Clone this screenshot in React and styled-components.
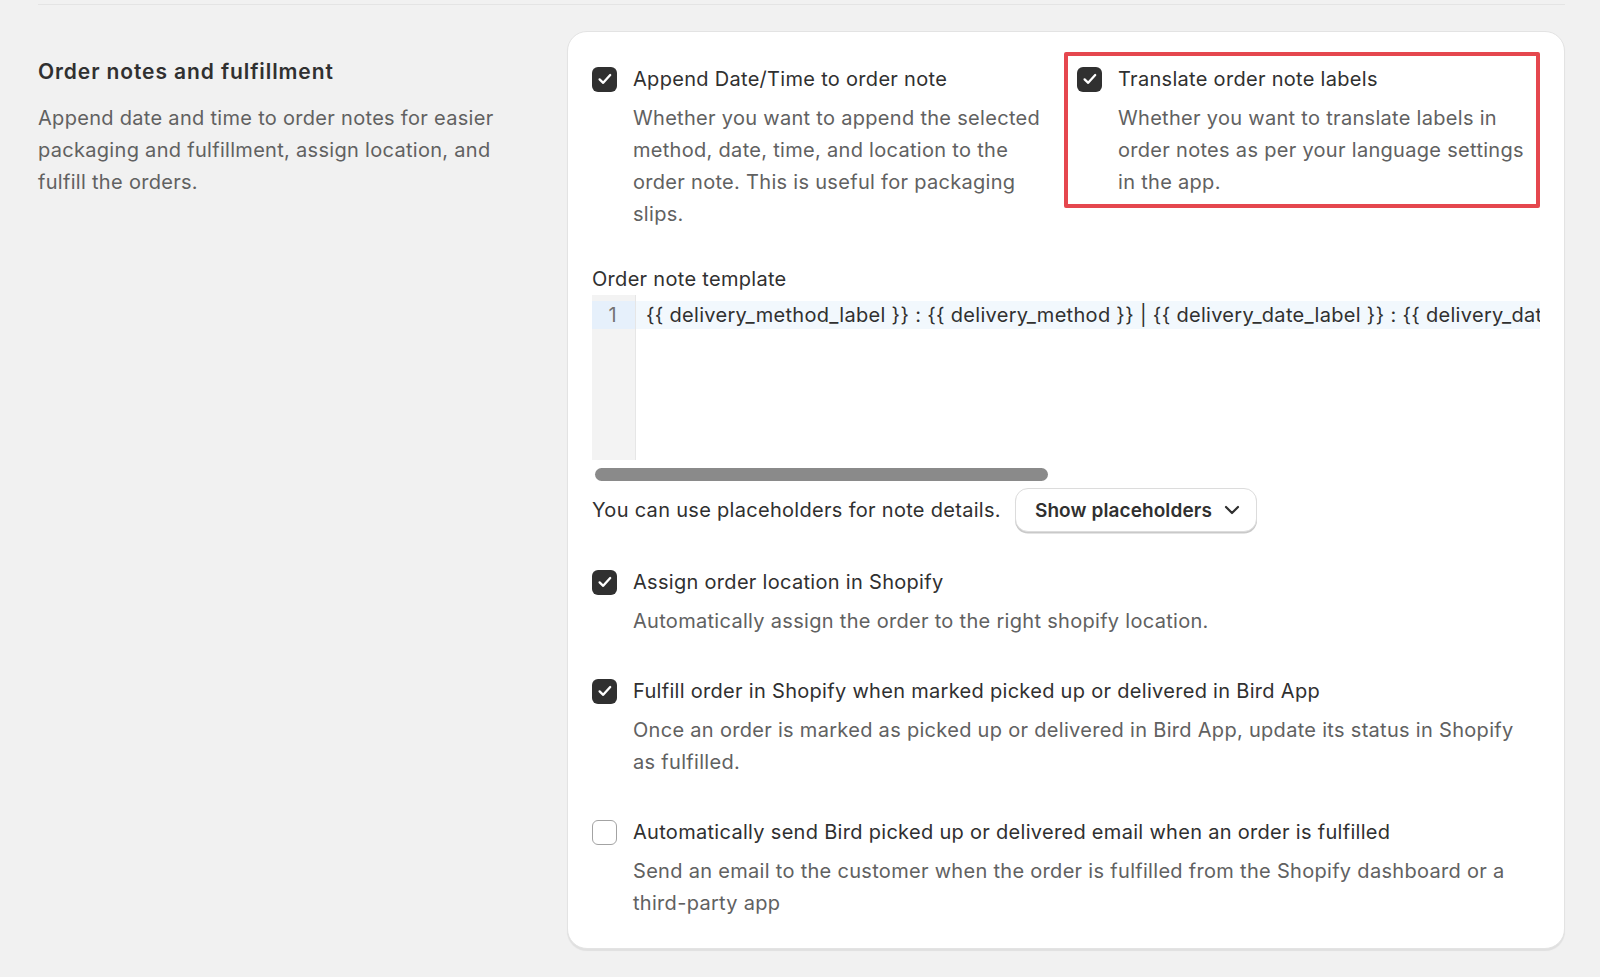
import React from 'react';
import styled, { createGlobalStyle } from 'styled-components';

const GlobalStyle = createGlobalStyle`
  html, body { margin: 0; padding: 0; background: #f1f1f1; }
  body {
    font-family: Inter, "Noto Sans", "Liberation Sans", sans-serif;
    color: #303030;
    letter-spacing: 0.3px;
    -webkit-font-smoothing: antialiased;
  }
  * { box-sizing: border-box; }
`;

const Page = styled.div`
  width: 1600px;
  height: 977px;
  overflow: hidden;
  padding: 4px 35px 0 38px;
`;

const Divider = styled.div`
  height: 1px;
  background: #e4e4e4;
`;

const Section = styled.section`
  display: grid;
  grid-template-columns: 500px minmax(0, 1fr);
  column-gap: 29px;
  padding-top: 26px;
`;

const Intro = styled.div`
  padding-top: 27px;
`;

const Heading = styled.h2`
  margin: 0 0 16px;
  font-size: 21px;
  line-height: 28px;
  font-weight: 600;
  letter-spacing: 0.9px;
  color: #303030;
`;

const IntroText = styled.p`
  margin: 0;
  font-size: 20px;
  line-height: 32px;
  color: #616161;
`;

const Card = styled.div`
  min-width: 0;
  background: #ffffff;
  border: 1px solid #e3e3e3;
  border-radius: 20px;
  box-shadow: 0 2px 1px rgba(0, 0, 0, 0.07);
  padding: 31px 24px 29px;
  display: flex;
  flex-direction: column;
`;

const TopRow = styled.div`
  display: grid;
  grid-template-columns: minmax(0, 1fr) minmax(0, 1fr);
  column-gap: 22px;
  align-items: start;
`;

const Highlighted = styled.div`
  position: relative;
  &::after {
    content: '';
    position: absolute;
    top: -11px;
    left: -13px;
    right: 0;
    bottom: -10px;
    border: 4px solid #e5474e;
    border-radius: 2px;
    pointer-events: none;
  }
`;

const Option = styled.div`
  display: grid;
  grid-template-columns: 25px minmax(0, 1fr);
  column-gap: 16px;
  row-gap: 7px;
`;

const Box = styled.span`
  grid-row: 1;
  grid-column: 1;
  align-self: center;
  width: 25px;
  height: 25px;
  border-radius: 6px;
  display: flex;
  align-items: center;
  justify-content: center;
  background: ${p => (p.$checked ? '#303030' : '#ffffff')};
  border: ${p => (p.$checked ? 'none' : '1.5px solid #a3a3a3')};
`;

const Label = styled.span`
  grid-row: 1;
  grid-column: 2;
  font-size: 20px;
  line-height: 32px;
  color: #303030;
`;

const Help = styled.span`
  grid-row: 2;
  grid-column: 2;
  font-size: 20px;
  line-height: 32px;
  color: #616161;
`;

const FieldLabel = styled.div`
  margin-top: 33px;
  font-size: 20px;
  line-height: 32px;
  color: #303030;
`;

const Editor = styled.div`
  display: flex;
  height: 165px;
  overflow: hidden;
  background: #ffffff;
`;

const Gutter = styled.div`
  width: 44px;
  flex: none;
  background: #f3f3f3;
  border-right: 1px solid #e6e6e6;
  padding-top: 6px;
`;

const GutterLine = styled.div`
  height: 28px;
  line-height: 28px;
  font-size: 20px;
  text-align: right;
  padding-right: 18px;
  color: #737373;
  background: ${p => (p.$active ? '#e6f0fb' : 'transparent')};
`;

const Code = styled.div`
  flex: 1;
  min-width: 0;
  padding-top: 6px;
`;

const CodeLine = styled.div`
  height: 28px;
  line-height: 28px;
  font-size: 20px;
  white-space: nowrap;
  overflow: hidden;
  padding-left: 10px;
  color: #303030;
  background: ${p => (p.$active ? '#f2f8fd' : 'transparent')};
`;

const ScrollTrack = styled.div`
  margin-top: 8px;
  padding-left: 3px;
  height: 13px;
`;

const ScrollThumb = styled.div`
  width: 453px;
  height: 13px;
  border-radius: 7px;
  background: #8a8a8a;
`;

const PlaceholderRow = styled.div`
  margin-top: 7px;
  display: flex;
  align-items: center;
  gap: 14px;
`;

const RowText = styled.span`
  font-size: 20px;
  line-height: 32px;
  color: #303030;
`;

const Button = styled.button`
  height: 44px;
  padding: 0 16px 0 19px;
  display: inline-flex;
  align-items: center;
  gap: 12px;
  background: #ffffff;
  border: 1px solid #dcdcdc;
  border-radius: 13px;
  box-shadow: 0 1.5px 0 #c9c9c9;
  font-family: inherit;
  font-size: 19px;
  letter-spacing: 0.1px;
  font-weight: 600;
  color: #303030;
  cursor: pointer;
`;

const OptionList = styled.div`
  margin-top: 34px;
  display: flex;
  flex-direction: column;
  gap: 38px;
`;

const Check = () => (
  <svg width="18" height="18" viewBox="0 0 18 18" fill="none">
    <path d="M3.6 9.4 L7.2 12.8 L14.2 5" stroke="#fff" strokeWidth="2.3" strokeLinecap="round" strokeLinejoin="round" />
  </svg>
);

const Chevron = () => (
  <svg width="16" height="10" viewBox="0 0 16 10" fill="none">
    <path d="M2 2 L8 8 L14 2" stroke="#303030" strokeWidth="2.2" strokeLinecap="round" strokeLinejoin="round" />
  </svg>
);

const Checkbox = ({ checked }) => (
  <Box $checked={checked}>{checked && <Check />}</Box>
);

const OptionItem = ({ checked, label, help }) => (
  <Option>
    <Checkbox checked={checked} />
    <Label>{label}</Label>
    <Help>{help}</Help>
  </Option>
);

const template =
  '{{ delivery_method_label }} : {{ delivery_method }} | {{ delivery_date_label }} : {{ delivery_date }} | {{ delivery_time_label }} : {{ delivery_time }} | {{ location_label }} : {{ location }}';

export default function App() {
  return (
    <>
      <GlobalStyle />
      <Page>
        <Divider />
        <Section>
          <Intro>
            <Heading>Order notes and fulfillment</Heading>
            <IntroText>
              Append date and time to order notes for easier packaging and fulfillment, assign location, and fulfill the orders.
            </IntroText>
          </Intro>
          <Card>
            <TopRow>
              <OptionItem
                checked
                label="Append Date/Time to order note"
                help="Whether you want to append the selected method, date, time, and location to the order note. This is useful for packaging slips."
              />
              <Highlighted>
                <OptionItem
                  checked
                  label="Translate order note labels"
                  help="Whether you want to translate labels in order notes as per your language settings in the app."
                />
              </Highlighted>
            </TopRow>

            <FieldLabel>Order note template</FieldLabel>
            <Editor>
              <Gutter>
                <GutterLine $active>1</GutterLine>
              </Gutter>
              <Code>
                <CodeLine $active>{template}</CodeLine>
              </Code>
            </Editor>
            <ScrollTrack>
              <ScrollThumb />
            </ScrollTrack>
            <PlaceholderRow>
              <RowText>You can use placeholders for note details.</RowText>
              <Button type="button">
                Show placeholders
                <Chevron />
              </Button>
            </PlaceholderRow>

            <OptionList>
              <OptionItem
                checked
                label="Assign order location in Shopify"
                help="Automatically assign the order to the right shopify location."
              />
              <OptionItem
                checked
                label="Fulfill order in Shopify when marked picked up or delivered in Bird App"
                help="Once an order is marked as picked up or delivered in Bird App, update its status in Shopify as fulfilled."
              />
              <OptionItem
                checked={false}
                label="Automatically send Bird picked up or delivered email when an order is fulfilled"
                help="Send an email to the customer when the order is fulfilled from the Shopify dashboard or a third-party app"
              />
            </OptionList>
          </Card>
        </Section>
      </Page>
    </>
  );
}
